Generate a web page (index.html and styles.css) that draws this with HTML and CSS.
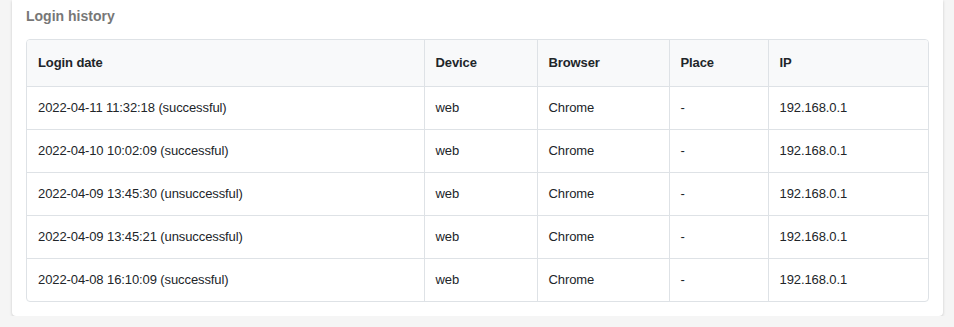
FILE: index.html
```html
<!doctype html>
<html lang="en">
  <head>
    <meta charset="UTF-8" />
    <title>Login history</title>
    <link rel="stylesheet" href="styles.css">
  </head>
  <body>
    <div class="card">
      <h2 class="card-title">Login history</h2>
      <div class="table-wrap">
        <table class="history">
          <colgroup>
            <col class="col-date" />
            <col class="col-device" />
            <col class="col-browser" />
            <col class="col-place" />
            <col />
          </colgroup>
          <thead>
            <tr>
              <th>Login date</th>
              <th>Device</th>
              <th>Browser</th>
              <th>Place</th>
              <th>IP</th>
            </tr>
          </thead>
          <tbody>
            <tr>
              <td>2022-04-11 11:32:18 (successful)</td>
              <td>web</td>
              <td>Chrome</td>
              <td>-</td>
              <td>192.168.0.1</td>
            </tr>
            <tr>
              <td>2022-04-10 10:02:09 (successful)</td>
              <td>web</td>
              <td>Chrome</td>
              <td>-</td>
              <td>192.168.0.1</td>
            </tr>
            <tr>
              <td>2022-04-09 13:45:30 (unsuccessful)</td>
              <td>web</td>
              <td>Chrome</td>
              <td>-</td>
              <td>192.168.0.1</td>
            </tr>
            <tr>
              <td>2022-04-09 13:45:21 (unsuccessful)</td>
              <td>web</td>
              <td>Chrome</td>
              <td>-</td>
              <td>192.168.0.1</td>
            </tr>
            <tr>
              <td>2022-04-08 16:10:09 (successful)</td>
              <td>web</td>
              <td>Chrome</td>
              <td>-</td>
              <td>192.168.0.1</td>
            </tr>
          </tbody>
        </table>
      </div>
    </div>
  </body>
</html>
```

FILE: styles.css
```css
body {
  margin: 0;
  background-color: #f5f5f5;
  font-family: "Liberation Sans", Arial, sans-serif;
  color: #212529;
  padding: 0 11px 0 12px;
}
.card {
  background: #fff;
  border-radius: 0 0 4px 4px;
  box-shadow: 0 1px 3px rgba(0, 0, 0, 0.18);
  padding: 7px 14px 14px 14px;
}
.card-title {
  margin: 0 0 14px 0;
  font-size: 14px;
  font-weight: bold;
  color: #777;
  line-height: 18px;
}
.table-wrap {
  border: 1px solid #dee2e6;
  border-radius: 4px;
  overflow: hidden;
}
.history {
  width: 100%;
  border-collapse: collapse;
  table-layout: fixed;
  font-size: 13px;
  letter-spacing: -0.1px;
}
.col-date {
  width: 397px;
}
.col-device {
  width: 113px;
}
.col-browser {
  width: 132px;
}
.col-place {
  width: 99px;
}
.history th,
.history td {
  text-align: left;
  padding: 0 11px 1px 11px;
  border-left: 1px solid #dee2e6;
  border-top: 1px solid #dee2e6;
}
.history th:first-child,
.history td:first-child {
  border-left: none;
}
.history thead th {
  border-top: none;
  height: 45px;
  background: #f8f9fa;
  font-weight: bold;
}
.history td {
  height: 41px;
}
```
